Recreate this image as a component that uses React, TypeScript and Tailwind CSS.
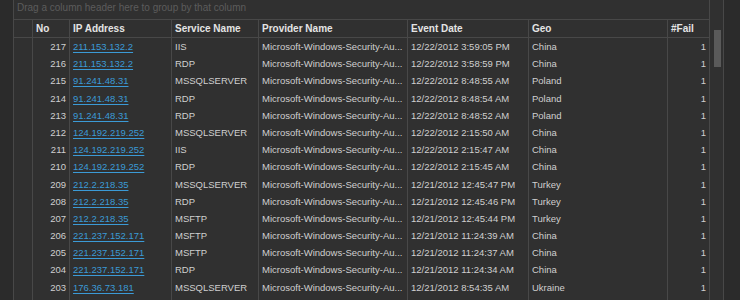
import React from "react";

type Row = [number, string, string, string, string, string];

const rows: Row[] = [
  [217, "211.153.132.2", "IIS", "12/22/2012 3:59:05 PM", "China", "1"],
  [216, "211.153.132.2", "RDP", "12/22/2012 3:58:59 PM", "China", "1"],
  [215, "91.241.48.31", "MSSQLSERVER", "12/22/2012 8:48:55 AM", "Poland", "1"],
  [214, "91.241.48.31", "RDP", "12/22/2012 8:48:54 AM", "Poland", "1"],
  [213, "91.241.48.31", "RDP", "12/22/2012 8:48:52 AM", "Poland", "1"],
  [212, "124.192.219.252", "MSSQLSERVER", "12/22/2012 2:15:50 AM", "China", "1"],
  [211, "124.192.219.252", "IIS", "12/22/2012 2:15:47 AM", "China", "1"],
  [210, "124.192.219.252", "RDP", "12/22/2012 2:15:45 AM", "China", "1"],
  [209, "212.2.218.35", "MSSQLSERVER", "12/21/2012 12:45:47 PM", "Turkey", "1"],
  [208, "212.2.218.35", "RDP", "12/21/2012 12:45:46 PM", "Turkey", "1"],
  [207, "212.2.218.35", "MSFTP", "12/21/2012 12:45:44 PM", "Turkey", "1"],
  [206, "221.237.152.171", "MSFTP", "12/21/2012 11:24:39 AM", "China", "1"],
  [205, "221.237.152.171", "MSFTP", "12/21/2012 11:24:37 AM", "China", "1"],
  [204, "221.237.152.171", "RDP", "12/21/2012 11:24:34 AM", "China", "1"],
  [203, "176.36.73.181", "MSSQLSERVER", "12/21/2012 8:54:35 AM", "Ukraine", "1"],
  [202, "176.36.73.181", "RDP", "12/21/2012 8:54:34 AM", "Ukraine", "1"],
];

const font = { fontFamily: '"Liberation Sans", Arial, sans-serif' };

export default function App() {
  return (
    <div
      className="flex h-[300px] w-[740px] overflow-hidden bg-[#303030] text-[9.5px] text-[#cfcfcf]"
      style={font}
    >
      <div className="h-full w-[14px] shrink-0 border-r border-[#484848] bg-[#2b2b2b]" />
      <div className="flex h-full w-[696px] shrink-0 flex-col border-r border-[#484848]">
        <div className="h-[20px] shrink-0 border-b border-[#484848] pl-[3px] pt-[1px] text-[10px] leading-[14px] text-[#5c5c5c]">
          Drag a column header here to group by that column
        </div>
        <div className="flex h-[18px] shrink-0 border-b border-[#484848] text-[10px] font-bold leading-[17px] text-[#e4e4e4]">
          <div className="w-[19px] shrink-0 border-r border-[#484848]" />
          <div className="w-[37px] shrink-0 border-r border-[#484848] pl-[3px]">No</div>
          <div className="w-[102px] shrink-0 border-r border-[#484848] pl-[3px]">IP Address</div>
          <div className="w-[87px] shrink-0 border-r border-[#484848] pl-[3px]">Service Name</div>
          <div className="w-[149px] shrink-0 border-r border-[#484848] pl-[3px]">Provider Name</div>
          <div className="w-[121px] shrink-0 border-r border-[#484848] pl-[3px]">Event Date</div>
          <div className="w-[139px] shrink-0 border-r border-[#484848] pl-[3px]">Geo</div>
          <div className="w-[41px] shrink-0 pl-[3px]">#Fail</div>
        </div>
        <div className="flex flex-1 flex-col">
          {rows.map((r) => (
            <div key={r[0]} className="flex h-[17.2px] shrink-0 leading-[17px]">
              <div className="w-[19px] shrink-0 border-r border-[#484848]" />
              <div className="w-[37px] shrink-0 border-r border-[#484848] pr-[3px] text-right">{r[0]}</div>
              <div className="w-[102px] shrink-0 overflow-hidden whitespace-nowrap border-r border-[#484848] pl-[3px]">
                <span className="text-[#3b9ad6] underline underline-offset-[2px]">{r[1]}</span>
              </div>
              <div className="w-[87px] shrink-0 overflow-hidden whitespace-nowrap border-r border-[#484848] pl-[3px]">{r[2]}</div>
              <div className="w-[149px] shrink-0 overflow-hidden whitespace-nowrap border-r border-[#484848] pl-[3px]">
                Microsoft-Windows-Security-Au...
              </div>
              <div className="w-[121px] shrink-0 overflow-hidden whitespace-nowrap border-r border-[#484848] pl-[3px]">{r[3]}</div>
              <div className="w-[139px] shrink-0 overflow-hidden whitespace-nowrap border-r border-[#484848] pl-[3px]">{r[4]}</div>
              <div className="w-[41px] shrink-0 pr-[3px] text-right">{r[5]}</div>
            </div>
          ))}
        </div>
      </div>
      <div className="h-full w-[14px] shrink-0 border-r border-[#484848] pt-[30px] pl-[4px]">
        <div className="h-[37px] w-[7px] bg-[#5a5a5a]" />
      </div>
      <div className="h-full flex-1 bg-[#2b2b2b]" />
    </div>
  );
}
